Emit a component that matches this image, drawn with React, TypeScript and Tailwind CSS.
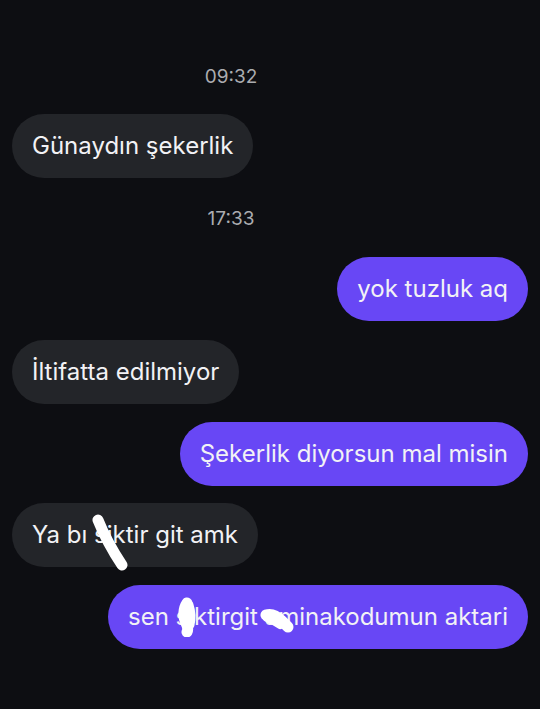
type Msg =
  | { kind: "time"; text: string; mt: string }
  | { kind: "in" | "out"; text: string; mt: string; scribbles?: "one" | "two" };

const messages: Msg[] = [
  { kind: "time", text: "09:32", mt: "mt-0" },
  { kind: "in", text: "Günaydın şekerlik", mt: "mt-[26px]" },
  { kind: "time", text: "17:33", mt: "mt-[30px]" },
  { kind: "out", text: "yok tuzluk aq", mt: "mt-[27px]" },
  { kind: "in", text: "İltifatta edilmiyor", mt: "mt-[19px]" },
  { kind: "out", text: "Şekerlik diyorsun mal misin", mt: "mt-[18px]" },
  { kind: "in", text: "Ya bı siktir git amk", mt: "mt-[17px]", scribbles: "one" },
  { kind: "out", text: "sen siktirgit aminakodumun aktari", mt: "mt-[18px]", scribbles: "two" },
];

function ScribbleOne() {
  return (
    <svg className="pointer-events-none absolute left-[80px] top-0" width="40" height="72" viewBox="0 0 40 72">
      <path d="M6 17 C12 32 22 50 30 62" stroke="white" strokeWidth="11" strokeLinecap="round" fill="none" />
    </svg>
  );
}

function ScribbleTwo() {
  return (
    <>
      <svg className="pointer-events-none absolute left-[65px] top-[12px]" width="30" height="40" viewBox="0 0 30 40">
        <path d="M14 6 C10 12 10 20 13 26 C15 30 15 33 14 35" stroke="white" strokeWidth="11" strokeLinecap="round" fill="none" />
        <path d="M16 8 C18 14 19 20 17 28" stroke="white" strokeWidth="9" strokeLinecap="round" fill="none" />
      </svg>
      <svg className="pointer-events-none absolute left-[152px] top-[22px]" width="34" height="26" viewBox="0 0 34 26">
        <path d="M6 8 C12 6 18 10 22 14 C25 17 27 19 28 20" stroke="white" strokeWidth="11" strokeLinecap="round" fill="none" />
        <path d="M7 11 C12 13 17 16 20 18" stroke="white" strokeWidth="8" strokeLinecap="round" fill="none" />
      </svg>
    </>
  );
}

export default function App() {
  return (
    <div
      className="flex min-h-[709px] w-[540px] flex-col bg-[#0d0e12] px-3 pt-[66px]"
      style={{ fontFamily: "Inter, 'Noto Sans', sans-serif" }}
    >
      {messages.map((m, i) =>
        m.kind === "time" ? (
          <div key={i} className={`${m.mt} w-[438px] text-center text-[19px] leading-[22px] text-[#abacb0]`}>
            {m.text}
          </div>
        ) : (
          <div key={i} className={`${m.mt} flex ${m.kind === "out" ? "justify-end" : "justify-start"}`}>
            <div
              className={`relative rounded-full px-5 py-[17px] text-[24px] leading-[30px] text-[#f2f2f5] ${
                m.kind === "out" ? "bg-[#6847f5]" : "bg-[#232529]"
              }`}
            >
              {m.text}
              {m.scribbles === "one" && <ScribbleOne />}
              {m.scribbles === "two" && <ScribbleTwo />}
            </div>
          </div>
        )
      )}
    </div>
  );
}
